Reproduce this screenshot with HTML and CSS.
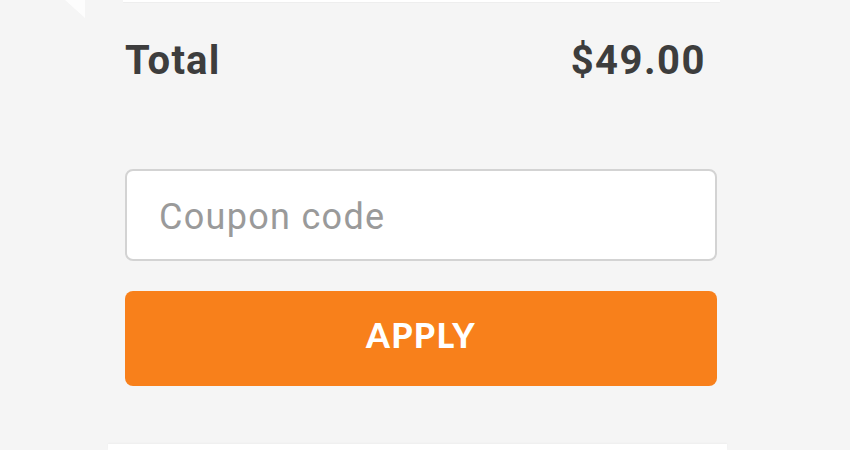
FILE: index.html
```html
<!DOCTYPE html>
<html lang="en">
<head>
<meta charset="utf-8">
<title>Cart summary</title>
<link rel="stylesheet" href="styles.css">
</head>
<body>
<div class="page">
  <svg class="fold" width="24" height="20" viewBox="0 0 24 20" aria-hidden="true">
    <polygon points="2,0 22,0 22,18" fill="#ffffff"/>
  </svg>
  <div class="top-card"></div>
  <div class="summary">
    <div class="total-row">
      <span class="total-label">Total</span>
      <span class="total-value">$49.00</span>
    </div>
    <form class="coupon" onsubmit="return false;">
      <input class="coupon-input" type="text" placeholder="Coupon code">
      <button class="apply-btn" type="button">APPLY</button>
    </form>
  </div>
  <div class="bottom-card"></div>
</div>
</body>
</html>
```

FILE: styles.css
```css
* { box-sizing: border-box; }
html, body { margin: 0; padding: 0; }
body {
  background: #f5f5f5;
  font-family: Roboto, "Liberation Sans", sans-serif;
}
.page {
  position: relative;
  width: 850px;
  height: 450px;
  overflow: hidden;
  display: flex;
  flex-direction: column;
}
.fold {
  position: absolute;
  left: 63px;
  top: 0;
  opacity: 0.85;
}
.top-card {
  margin-left: 123px;
  width: 597px;
  height: 2px;
  background: #ffffff;
  box-shadow: 0 1px 1px rgba(0,0,0,0.03);
}
.summary {
  margin-left: 125px;
  width: 592px;
  display: flex;
  flex-direction: column;
}
.total-row {
  margin-top: 35px;
  display: flex;
  justify-content: space-between;
  align-items: baseline;
  padding-right: 11px;
  font-size: 40px;
  line-height: 48px;
  font-weight: 700;
  color: #3d3d3d;
}
.total-label { letter-spacing: 1.2px; }
.total-value { letter-spacing: 1.5px; }
.coupon {
  margin: 84px 0 0 0;
  display: flex;
  flex-direction: column;
  gap: 30px;
}
.coupon-input {
  width: 100%;
  height: 92px;
  border: 2px solid #d3d3d3;
  border-radius: 8px;
  background: #ffffff;
  padding: 4px 32px 0 32px;
  font-family: Roboto, "Liberation Sans", sans-serif;
  font-size: 36px;
  letter-spacing: 1.3px;
  color: #555;
  outline: none;
}
.coupon-input::placeholder { color: #9a9a9a; }
.apply-btn {
  width: 100%;
  height: 95px;
  border: 0;
  border-radius: 8px;
  background: #f8801b;
  color: #ffffff;
  font-family: Lato, "Open Sans", sans-serif;
  font-weight: 900;
  font-size: 34px;
  letter-spacing: 1.3px;
  padding: 0 0 9px 0;
}
.bottom-card {
  margin-top: auto;
  margin-left: 108px;
  width: 619px;
  height: 6px;
  background: #ffffff;
  box-shadow: 0 -1px 2px rgba(0,0,0,0.03);
}
```
